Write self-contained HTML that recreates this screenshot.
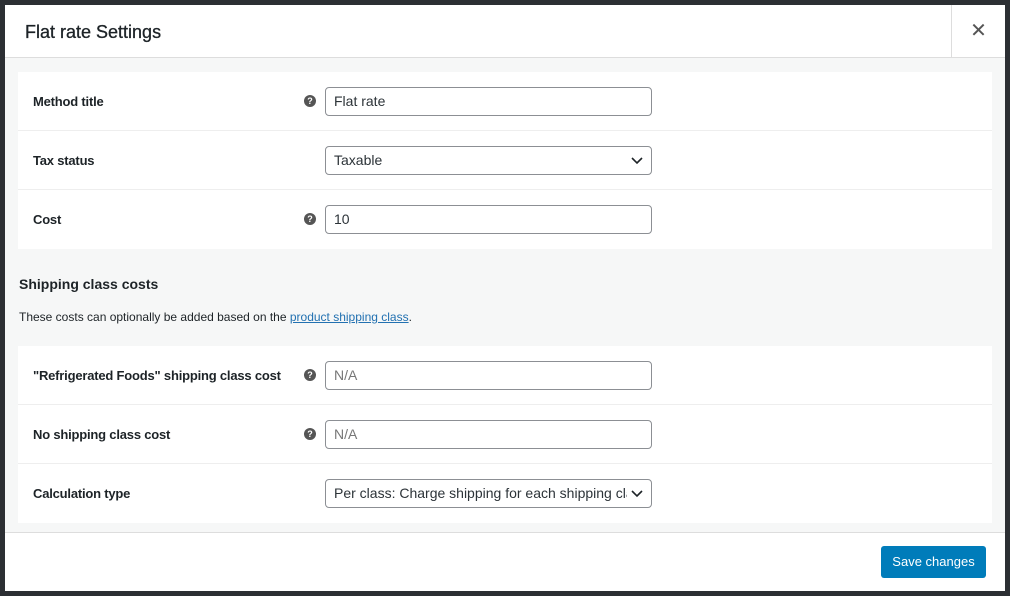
<!DOCTYPE html>
<html><head><style>
*{box-sizing:border-box;margin:0;padding:0}
body{width:1010px;height:596px;background:#2c2f33;font-family:"Liberation Sans",sans-serif;position:relative;overflow:hidden;color:#1d2327}
.modal{position:absolute;left:5px;top:5px;width:1000px;height:586px;background:#f6f7f7}
.hdr{position:absolute;left:0;top:0;width:1000px;height:53px;background:#fff;border-bottom:1px solid #ddd}
.hdr h1{position:absolute;left:20px;top:17px;font-size:18px;font-weight:normal;color:#1d2327;-webkit-text-stroke:0.3px #1d2327}
.close{position:absolute;right:0;top:0;width:54px;height:53px;border-left:1px solid #ddd;text-align:center;line-height:52px;font-size:20px;color:#555}
.panel{position:absolute;left:13px;width:974px;background:#fff}
.row{position:relative;height:59px;border-bottom:1px solid #eee}
.row:last-child{border-bottom:none}
.lbl{position:absolute;left:15px;top:22px;font-size:13px;font-weight:bold;color:#1d2327;letter-spacing:-0.2px}
.q{position:absolute;left:286px;top:23px;width:12px;height:12px;border-radius:50%;background:#555;color:#fff;font-size:9px;font-weight:bold;text-align:center;line-height:12px}
.inp{position:absolute;left:307px;top:15px;width:327px;height:29px;border:1px solid #8c8f94;border-radius:4px;padding:0 8px;font-size:14px;line-height:27px;color:#2c3338;white-space:nowrap;overflow:hidden}
.ph{color:#777}
.chev{position:absolute;right:8px;top:8px}
.clip{position:absolute;left:8px;right:24px;top:0;overflow:hidden;white-space:nowrap}
h2{position:absolute;left:14px;top:271px;font-size:14px;font-weight:bold;color:#1d2327}
p{position:absolute;left:14px;top:305px;font-size:12px;color:#1d2327}
a{color:#2271b1;text-decoration:underline}
.ftr{position:absolute;left:0;top:527px;width:1000px;height:59px;background:#fff;border-top:1px solid #ddd}
.btn{position:absolute;left:876px;top:13px;width:105px;height:32px;background:#007cba;border-radius:3px;color:#fff;font-size:13px;text-align:center;line-height:32px}
</style></head><body>
<div class="modal">
<div class="hdr"><h1>Flat rate Settings</h1><div class="close">✕</div></div>
<div class="panel" style="top:67px">
<div class="row"><div class="lbl">Method title</div><div class="q">?</div><div class="inp">Flat rate</div></div>
<div class="row"><div class="lbl">Tax status</div><div class="inp">Taxable<svg class="chev" width="12" height="10" viewBox="0 0 12 10"><path d="M1 3l5 5 5-5" stroke="#1d2327" stroke-width="1.6" fill="none"/></svg></div></div>
<div class="row"><div class="lbl">Cost</div><div class="q">?</div><div class="inp">10</div></div>
</div>
<h2>Shipping class costs</h2>
<p>These costs can optionally be added based on the <a>product shipping class</a>.</p>
<div class="panel" style="top:341px">
<div class="row"><div class="lbl">"Refrigerated Foods" shipping class cost</div><div class="q">?</div><div class="inp ph">N/A</div></div>
<div class="row"><div class="lbl">No shipping class cost</div><div class="q">?</div><div class="inp ph">N/A</div></div>
<div class="row"><div class="lbl">Calculation type</div><div class="inp"><span class="clip">Per class: Charge shipping for each shipping class</span><svg class="chev" width="12" height="10" viewBox="0 0 12 10"><path d="M1 3l5 5 5-5" stroke="#1d2327" stroke-width="1.6" fill="none"/></svg></div></div>
</div>
<div class="ftr"><div class="btn">Save changes</div></div>
</div>
</body></html>
